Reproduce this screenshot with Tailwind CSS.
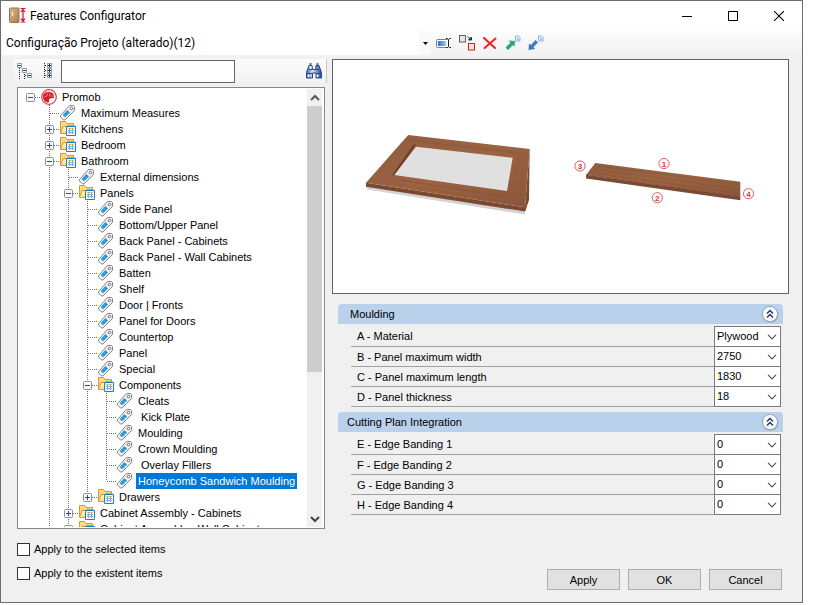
<!DOCTYPE html>
<html lang="en">
<head>
<meta charset="utf-8">
<title>Features Configurator</title>
<script src="https://cdn.jsdelivr.net/npm/@tailwindcss/browser@4"></script>
</head>
<body class="h-screen overflow-hidden bg-white pr-2.5 pb-0.5 font-['Liberation_Sans',Arial,sans-serif] text-[11px] leading-4 text-black">

<svg class="absolute size-0" aria-hidden="true">
  <defs>
    <linearGradient id="wood" x1="0" y1="0" x2="1" y2="1"><stop offset="0" stop-color="#905c40"/><stop offset=".5" stop-color="#9b6341"/><stop offset="1" stop-color="#8b573b"/></linearGradient>
    <linearGradient id="door" x1="0" y1="0" x2="1" y2="1"><stop offset="0" stop-color="#d8b98c"/><stop offset="1" stop-color="#a8804f"/></linearGradient>
    <linearGradient id="fieldblue" x1="0" y1="0" x2="1" y2="0"><stop offset="0" stop-color="#2f6fd8"/><stop offset="1" stop-color="#9cc4fa"/></linearGradient>
    <linearGradient id="bino" x1="0" y1="0" x2="1" y2="0"><stop offset="0" stop-color="#3a66a8"/><stop offset=".4" stop-color="#d4e4f8"/><stop offset="1" stop-color="#23488c"/></linearGradient>
  </defs>
  <symbol id="tag" viewBox="0 0 18 16">
    <path d="M10.500 .5h4l1 1v4L6 15H4.500L1.500 12v-1.500z" fill="#f2f2f2" stroke="#858585"/>
    <path d="M8.500 5l2.500 2.500-5 5L3.500 10z" fill="#38a0dc"/><path d="M7.500 6l2.500 2.500M5.500 8L8 10.500" stroke="#1a74b4" stroke-width=".7" fill="none"/>
    <circle cx="12.500" cy="3.500" r="1.300" fill="#fff" stroke="#6f6f6f"/>
  </symbol>
  <symbol id="folder" viewBox="0 0 18 16">
    <path d="M1.500 12.500v-12h5l1.500 2h6.500v10z" fill="#fbdc82" stroke="#d9982f"/>
    <path d="M1.500 12.500l2.500-7h3.500l1-1h7" fill="#fff0b0" stroke="#d9982f"/>
    <path d="M7.500 5.500h9v9h-9z" fill="#fff" stroke="#1583c4" />
    <path d="M9 7.500h6" stroke="#f0c050"/><path d="M9 9.500h6M9 11.500h6M10.500 7v6M13.500 7v6" stroke="#7eb4dc"/>
  </symbol>
  <symbol id="promob" viewBox="0 0 18 16">
    <circle cx="9" cy="8" r="7.300" fill="#fff" stroke="#dc3c46" stroke-width="1.200"/>
    <path d="M8.500 2.800a5.300 5.300 0 1 0 .5 10.500V10l2-.5 2.800-.5V6a5.300 5.300 0 0 0-5.300-3.200z" fill="#d71f2c"/>
    <path d="M7.500 3.500L7 7 4 8M10 3.500L9.500 7h4" stroke="#f3a0a5" stroke-width=".6" fill="none"/>
    <path d="M10.500 9.500h2.800l-2.500 3z" fill="#fff"/>
  </symbol>
  <symbol id="collapse" viewBox="0 0 18 18">
    <circle cx="9.500" cy="9.800" r="8" fill="#7f93aa" opacity=".6"/>
    <circle cx="9" cy="9" r="7.600" fill="#fbfbfd" stroke="#9aa3b2"/>
    <path d="M6 8.500l3-3 3 3M6 12.500l3-3 3 3" fill="none" stroke="#1d2d66" stroke-width="1.300"/>
  </symbol>
  <symbol id="chev" viewBox="0 0 10 6"><path d="M1 .8l4 4 4-4" fill="none" stroke="#555" stroke-width="1.200"/></symbol>
</svg>

<div class="flex h-full flex-col border border-[#6e6e6e] bg-[#f0f0f0]">

  <header class="flex h-[30px] shrink-0 items-center bg-white pl-2 font-[Roboto,'Segoe_UI',sans-serif]">
    <svg class="size-[18px]" viewBox="0 0 18 18">
      <rect x=".5" y="1" width="9.500" height="14.500" rx="1" fill="url(#door)" stroke="#8f7350"/>
      <path d="M3.500 5v4" stroke="#f4ead8" stroke-width="1.500"/>
      <path d="M11.500 1.500h5M11.500 15h5M14 3v11M12 5l2-2.500L16 5M12 11.500l2 2.500 2-2.500" fill="none" stroke="#d5122a" stroke-width="1.200"/>
    </svg>
    <h1 class="ml-[3px] flex-1 text-xs">Features Configurator</h1>
    <button aria-label="Minimize" class="grid h-full w-[46px] place-items-center"><svg class="size-2.5" viewBox="0 0 10 10"><path d="M0 5.500h10" stroke="#000"/></svg></button>
    <button aria-label="Maximize" class="grid h-full w-[46px] place-items-center"><svg class="size-2.5" viewBox="0 0 10 10"><path d="M.5.5h9v9h-9z" fill="none" stroke="#000"/></svg></button>
    <button aria-label="Close" class="grid h-full w-[46px] place-items-center"><svg class="size-2.5" viewBox="0 0 10 10"><path d="M0 0l10 10M10 0L0 10" stroke="#000" stroke-width="1.100"/></svg></button>
  </header>

  <div class="flex h-7 shrink-0 items-start bg-linear-to-b from-[#fcfcfc] to-[#f0f0f0] pl-px">
    <div class="relative h-6 w-[429px]">
      <select aria-label="Configuration" class="h-full w-full appearance-none bg-white pl-1 font-[Roboto,'Segoe_UI',sans-serif] text-xs"><option>Configuração Projeto (alterado)(12)</option></select>
      <span class="pointer-events-none absolute inset-y-0 right-0 grid w-3 place-items-center bg-[#fafafa]"><svg class="h-[3px] w-[5px]" viewBox="0 0 5 3"><path d="M0 0h5L2.500 3z"/></svg></span>
    </div>
    <div class="flex gap-[7px] pt-1 pl-[5px]">
      <button aria-label="Rename"><svg class="size-4" viewBox="0 0 16 16"><rect x=".5" y="4.500" width="12" height="8" rx="1" fill="#fff" stroke="#6b7fa8"/><rect x="2" y="6" width="8" height="5" fill="url(#fieldblue)"/><path d="M10 3.500h1.500l1 1 1-1H15M12.500 4.500v7M10 12.500h1.500l1-1 1 1H15" fill="none" stroke="#222"/></svg></button>
      <button aria-label="Duplicate"><svg class="size-4" viewBox="0 0 16 16"><rect x=".5" y=".5" width="6" height="6.500" fill="#e6e6e6" stroke="#6e5c5c"/><path d="M8.500 1.500l3 2.500M12.500 2v3h-3z" stroke="#1c2d78" fill="#1c2d78"/><rect x="9.500" y="8.500" width="6" height="6.500" fill="#f4e4e4" stroke="#e01818"/></svg></button>
      <button aria-label="Delete"><svg class="size-4" viewBox="0 0 16 16"><path d="M2 3l11 10M13.500 3.500L2.500 13" stroke="#f02020" stroke-width="2" stroke-linecap="round"/></svg></button>
      <button aria-label="Export"><svg class="size-4" viewBox="0 0 16 16"><path d="M.5 12.500l5-5-2-2 6.500.5-.5 6-1.500-2L3 15z" fill="#2ea37c"/><path d="M10.500 1h3l1.500 1.500V6h-4.500z" fill="#e4f0fc" stroke="#8fb2dc"/><path d="M12 4h2" stroke="#6f9bd0"/></svg></button>
      <button aria-label="Import"><svg class="size-4" viewBox="0 0 16 16"><path d="M10 7.500L5.500 12l1.500 2-6.500 1 .5-6.500 2 1.500L7.500 5z" fill="#3b7ac8"/><path d="M10.500 1h3l1.500 1.500V6h-4.500z" fill="#e4f0fc" stroke="#8fb2dc"/><path d="M12 4h2" stroke="#6f9bd0"/></svg></button>
    </div>
  </div>

  <main class="flex min-h-0 flex-1 gap-[5px] pr-[13px] pb-3 pl-[13px]">

    <section class="flex w-[313px] shrink-0 flex-col">
      <div class="flex h-6 shrink-0 items-center border-r border-[#c8c8c8] bg-linear-to-b from-[#fbfbfb] to-[#f1f1f1] pr-1 pl-[3px]">
        <button aria-label="Expand all"><svg class="size-4" viewBox="0 0 16 16"><path d="M2.500 5v11" stroke="#222" stroke-dasharray="1 1"/><path d="M5 7.500h2M7.500 9v7M8 12.500h3" stroke="#222" stroke-dasharray="1 1"/><g fill="#fff" stroke="#8c9aa8"><path d="M.5 .5h4v4h-4zM5.500 5.500h4v4h-4zM10.500 10.500h4v4h-4z"/></g><path d="M1 2.500h3M6 7.500h3M11 12.500h3" stroke="#345"/></svg></button>
        <button aria-label="Collapse all" class="ml-2"><svg class="size-4" viewBox="0 0 16 16"><path d="M3.500 0v16M4 2.500h2M4 7.500h2M4 12.500h2" stroke="#222" stroke-dasharray="1 1"/><g fill="#fff" stroke="#8c9aa8"><path d="M6.500 .5h4v4h-4zM6.500 5.500h4v4h-4zM6.500 10.500h4v4h-4z"/></g><path d="M7 2.500h3M7 7.500h3M7 12.500h3M8.500 1v3M8.500 6v3M8.500 11v3" stroke="#234"/></svg></button>
        <input aria-label="Search" class="ml-1 h-[23px] w-[174px] border border-[#646464] bg-white px-1">
        <button aria-label="Find" class="ml-auto"><svg class="size-4" viewBox="0 0 16 16"><path d="M3 2.500h3l.5 4H9.500l.5-4h3l2.500 7V15h-5.500v-5H6.500v5H.5V9.500z" fill="url(#bino)" stroke="#23458a"/><path d="M3.500 1h2M10.500 1h2" stroke="#23458a" stroke-width="1.500"/><path d="M1 10.500h5M10 10.500h5M3 6.500h3M10 6.500h3" stroke="#23458a"/><path d="M2.500 11.500V14M11.500 11.500V14M4.500 3v3" stroke="#fff" stroke-width="1.500"/></svg></button>
      </div>

      <div class="mt-1 ml-[3px] mr-[2px] flex h-[442px] shrink-0 border border-[#828790] bg-white p-px">
        <ul id="tree" role="tree" class="min-w-0 flex-1 overflow-hidden pl-[2px]"></ul>
        <div class="flex w-[15px] flex-col items-center bg-[#f0f0f0]" aria-hidden="true">
          <span class="grid h-[17px] place-items-center"><svg class="h-2 w-2.5" viewBox="0 0 10 8"><path d="M1 6l4-4 4 4" fill="none" stroke="#555" stroke-width="2"/></svg></span>
          <span class="h-[266px] w-full bg-[#cdcdcd]"></span>
          <span class="mt-auto grid h-[17px] place-items-center"><svg class="h-2 w-2.5" viewBox="0 0 10 8"><path d="M1 2l4 4 4-4" fill="none" stroke="#444" stroke-width="2"/></svg></span>
        </div>
        <span class="w-px"></span>
      </div>

      <div class="mt-3 ml-[3px] flex flex-col gap-2">
        <label class="flex h-4 items-center gap-1"><input type="checkbox" class="size-[13px] appearance-none border border-[#333] bg-white">Apply to the selected items</label>
        <label class="flex h-4 items-center gap-1"><input type="checkbox" class="size-[13px] appearance-none border border-[#333] bg-white">Apply to the existent items</label>
      </div>
    </section>

    <section class="flex min-w-0 flex-1 flex-col">
      <figure class="h-[235px] shrink-0 border border-[#646464] bg-white">
        <svg class="h-full w-full" viewBox="333 60 455 233" role="img" aria-label="Panel preview">
          <path d="M366 186L525 210.500v4L367 189.500z" fill="#d3d3d3"/>
          <path d="M366 182.700L525 207.300 529.700 149 529 200 525.200 211.500 366 186.700z" fill="#7b4930"/>
          <path d="M408.300 135L529.700 149 525 207.300 366 182.700z" fill="url(#wood)"/>
          <path d="M388 159l15-18M382 166l15-18M377 177l7-9M404 139l110 13M412 141l112 13M380 177l136 21M376 181l146 23M400 180l120 19M519 156l-4 40M524 155l-4 42" stroke="#7d4a30" stroke-width=".5" opacity=".4" fill="none"/>
          <path d="M416 144.500L413.500 144.500 392.500 174.500 394.500 175.500z" fill="#6b3d26"/>
          <path d="M416 146.700L512.700 157.700 507 191 394.300 175z" fill="#e0e0e1"/>
          <path d="M595.300 163L740.300 181.700 740.300 197 586 175z" fill="url(#wood)"/>
          <path d="M586 174.800L740.300 196.500 740.300 200.300 586 178.500z" fill="#794a34"/>
          <path d="M598 166l140 18M594 169l144 20M592 173l146 20" stroke="#744530" stroke-width=".6" opacity=".4"/>
          <g fill="#fff" stroke="#e0484c" stroke-width=".9"><circle cx="664" cy="163.500" r="5.100"/><circle cx="657.300" cy="197.700" r="5.100"/><circle cx="580" cy="166" r="5.100"/><circle cx="748.500" cy="193.700" r="5.100"/></g>
          <g fill="#dc3236" class="text-[8px] font-bold" text-anchor="middle"><text x="664" y="166.500">1</text><text x="657.300" y="200.700">2</text><text x="580" y="169">3</text><text x="748.500" y="196.700">4</text></g>
        </svg>
      </figure>

      <div id="groups" class="mt-2.5 mr-[6px] ml-[6px] flex flex-col gap-[5px]"></div>

      <div class="mt-auto mr-[7px] flex justify-end gap-2">
        <button class="h-[21px] w-[73px] border border-[#adadad] bg-[#e1e1e1]">Apply</button>
        <button class="h-[21px] w-[73px] border border-[#adadad] bg-[#e1e1e1]">OK</button>
        <button class="h-[21px] w-[73px] border border-[#adadad] bg-[#e1e1e1]">Cancel</button>
      </div>
    </section>
  </main>
</div>

<script>
// Tree nodes: [depth, label, kind, state]; state is '+', '-' or '' for leaves
const nodes = [
  [0,'Promob','promob','-'],[1,'Maximum Measures','tag',''],[1,'Kitchens','folder','+'],[1,'Bedroom','folder','+'],
  [1,'Bathroom','folder','-'],[2,'External dimensions','tag',''],[2,'Panels','folder','-'],
  [3,'Side Panel','tag',''],[3,'Bottom/Upper Panel','tag',''],[3,'Back Panel - Cabinets','tag',''],[3,'Back Panel - Wall Cabinets','tag',''],
  [3,'Batten','tag',''],[3,'Shelf','tag',''],[3,'Door | Fronts','tag',''],[3,'Panel for Doors','tag',''],[3,'Countertop','tag',''],
  [3,'Panel','tag',''],[3,'Special','tag',''],[3,'Components','folder','-'],
  [4,'Cleats','tag',''],[4,'\u00a0Kick Plate','tag',''],[4,'Moulding','tag',''],[4,'Crown Moulding','tag',''],[4,'\u00a0Overlay Fillers','tag',''],
  [4,'Honeycomb Sandwich Moulding','tag',''],[3,'Drawers','folder','+'],
  [2,'Cabinet Assembly - Cabinets','folder','+'],[2,'Cabinet Assembly - Wall Cabinets','folder','-']
];
const selected = 'Honeycomb Sandwich Moulding';
// True when another node of the given depth follows inside the same parent
const continues = (i, depth) => {
  if (depth === 0) return false;
  for (let j = i + 1; j < nodes.length; j++) {
    if (nodes[j][0] === depth) return true;
    if (nodes[j][0] < depth) return false;
  }
  return depth <= 2;
};
const dots = d => `<path d="${d}" stroke="#707070" stroke-dasharray="1 1" fill="none"/>`;
const cell = inner => `<svg class="h-4 w-[19px] shrink-0" viewBox="0 0 19 16">${inner}</svg>`;
document.getElementById('tree').innerHTML = nodes.map(([depth, label, icon, state], i) => {
  let row = '';
  // Ancestor columns start at depth 1: the root has no siblings to connect
  for (let d = 0; d < depth; d++) row += cell(continues(i, d) ? dots('M9.5 0V16') : '');
  let own = dots('M10 8.500H19');
  if (depth > 0) own += dots(continues(i, depth) ? 'M9.5 0V16' : 'M9.5 0V8');
  if (state) own += `<rect x="5.500" y="4.500" width="8" height="8" rx="1" fill="#f8f8f8" stroke="#8f8f8f"/><path d="M7 8.500h5${state === '+' ? 'M9.500 6v5' : ''}" stroke="#2a4a9a"/>`;
  row += cell(own) + `<svg class="mr-px h-4 w-[18px] shrink-0"><use href="#${icon}"/></svg>`;
  const on = label === selected;
  return `<li role="treeitem" class="flex h-4 items-center whitespace-nowrap">${row}<span class="${on ? 'ml-px bg-[#0078d7] px-[2px] text-white' : 'ml-px px-[2px]'}">${label}</span></li>`;
}).join('');

const groups = [
  ['Moulding', 'pl-3', [['A - Material','Plywood'],['B - Panel maximum width','2750'],['C - Panel maximum length','1830'],['D - Panel thickness','18']]],
  ['Cutting Plan Integration', 'pl-[9px]', [['E - Edge Banding 1','0'],['F - Edge Banding 2','0'],['G - Edge Banding 3','0'],['H - Edge Banding 4','0']]]
];
document.getElementById('groups').innerHTML = groups.map(([title, pad, rows], g) => `
  <section>
    <div class="flex h-5 items-center justify-between rounded-t bg-[#b9d1ea] pr-1 ${pad}">
      <h2>${title}</h2><button aria-label="Collapse ${title}"><svg class="size-[18px]"><use href="#collapse"/></svg></button>
    </div>
    <div class="mt-[2px] mr-[2px] ml-[13px] border-r border-[#7a7a7a]">
      ${rows.map(([label, value], r) => `
      <div class="flex h-5 ${r === 0 ? 'h-[21px]' : ''} items-stretch">
        <label for="f${g}${r}" class="flex flex-1 items-center border-b border-[#a0a0a0] pl-[6px]">${label}</label>
        <div class="relative w-[66px] border-b border-l border-[#7a7a7a] bg-white ${r === 0 ? 'border-t' : ''}">
          <select id="f${g}${r}" class="block h-full w-full appearance-none bg-transparent pb-[2px] pl-[2px]"><option>${value}</option></select>
          <svg class="pointer-events-none absolute top-[7px] right-[3px] h-[6px] w-2.5"><use href="#chev"/></svg>
        </div>
      </div>`).join('')}
    </div>
  </section>`).join('');
</script>
</body>
</html>
